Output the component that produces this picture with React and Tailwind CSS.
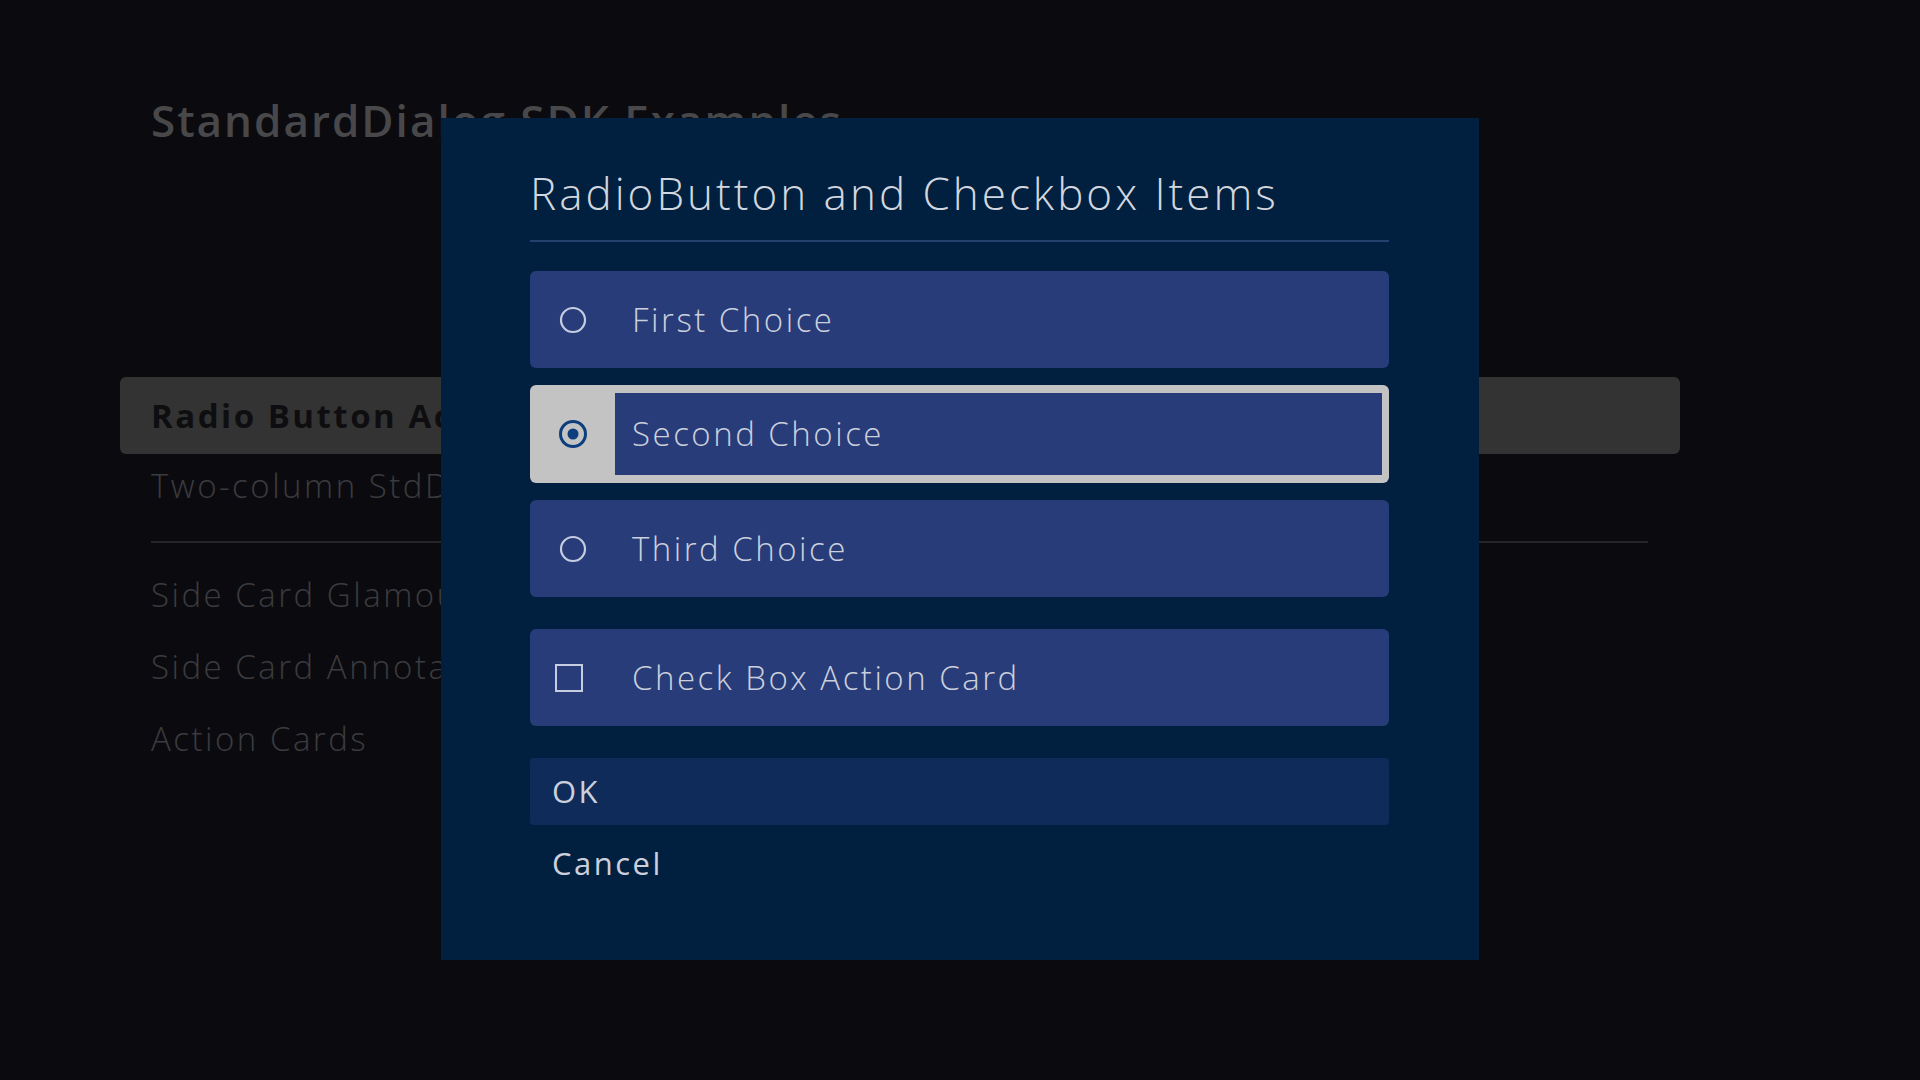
const FONT = "font-['Open_Sans','Liberation_Sans',sans-serif]";

const MENU = [
  'Two-column StdDlg',
  null,
  'Side Card Glamour',
  'Side Card Annotation',
  'Action Cards',
];

const CHOICES = [
  { label: 'First Choice', checked: false },
  { label: 'Second Choice', checked: true, focused: true },
  { label: 'Third Choice', checked: false },
];

function RadioIcon({ checked }) {
  if (checked) {
    return (
      <svg width="30" height="30" viewBox="0 0 30 30">
        <circle cx="15" cy="15" r="12.5" fill="none" stroke="#0c3d7c" strokeWidth="3" />
        <circle cx="15" cy="15" r="5.5" fill="#0c3d7c" />
      </svg>
    );
  }
  return (
    <svg width="30" height="30" viewBox="0 0 30 30">
      <circle cx="15" cy="15" r="12" fill="none" stroke="#c6cde0" strokeWidth="2.2" />
    </svg>
  );
}

function CheckIcon() {
  return (
    <svg width="28" height="28" viewBox="0 0 28 28" className="mr-[8px]">
      <rect x="1" y="1" width="26" height="26" fill="none" stroke="#c6cde0" strokeWidth="2" />
    </svg>
  );
}

function ChoiceCard({ icon, label, focused }) {
  if (focused) {
    return (
      <div className="flex h-[98px] rounded-md bg-[#c3c3c3] py-[8px] pr-[7px]">
        <div className="flex w-[85px] items-center justify-center">{icon}</div>
        <div className="flex flex-1 items-center bg-[#283c79] pl-[17px] text-[33px] font-light tracking-[2.5px] text-[#cbd0dc]">
          {label}
        </div>
      </div>
    );
  }
  return (
    <div className="flex h-[97px] items-center rounded-md bg-[#283c79]">
      <div className="flex w-[85px] items-center justify-center">{icon}</div>
      <div className="pl-[17px] text-[33px] font-light tracking-[2.5px] text-[#cbd0dc]">{label}</div>
    </div>
  );
}

function Dialog() {
  return (
    <div className="absolute left-[441px] top-[118px] flex h-[842px] w-[1038px] flex-col bg-[#01203f] px-[89px] pr-[90px]">
      <div className="mt-[47px] border-b-2 border-[#23406e] pb-[19px] text-[44px] font-light leading-[56px] tracking-[3px] text-[#d2d6de]">
        RadioButton and Checkbox Items
      </div>
      <div className="mt-[29px] flex flex-col gap-[17px]">
        {CHOICES.map((c) => (
          <ChoiceCard key={c.label} icon={<RadioIcon checked={c.checked} />} label={c.label} focused={c.focused} />
        ))}
      </div>
      <div className="mt-[32px]">
        <ChoiceCard icon={<CheckIcon />} label="Check Box Action Card" />
      </div>
      <div className="mt-[32px] flex h-[67px] items-center rounded bg-[#0f2b59] pl-[22px] text-[31px] tracking-[2.5px] text-[#cbd0dc]">
        OK
      </div>
      <div className="mt-[5px] flex h-[67px] items-center pl-[22px] text-[31px] tracking-[2.5px] text-[#cbd0dc]">
        Cancel
      </div>
    </div>
  );
}

export default function App() {
  return (
    <div className={`relative h-[1080px] w-[1920px] overflow-hidden bg-[#0b0b0f] ${FONT}`}>
      <div className="px-[120px] pt-[96px]">
        <div className="pl-[31px] text-[44px] font-semibold leading-[48px] tracking-[2px] text-[#48484b]">
          StandardDialog SDK Examples
        </div>

        <div className="mt-[233px] w-[1560px]">
          <div className="flex h-[77px] items-center rounded-md bg-[#333333] px-[31px] text-[33px] font-bold tracking-[2.5px] text-[#0e0e10]">
            Radio Button Action Cards
          </div>
          {MENU.map((item, i) =>
            item === null ? (
              <div key={i} className="mx-[31px] mt-[23px] mb-[16px] h-[2px] w-[1497px] bg-[#252528]" />
            ) : (
              <div
                key={i}
                className={`flex items-center px-[31px] text-[33px] font-light tracking-[2.5px] text-[#3b3b3f] ${i === 0 ? 'h-[64px]' : 'h-[72px]'}`}
              >
                {item}
              </div>
            )
          )}
        </div>
      </div>

      <Dialog />
    </div>
  );
}
